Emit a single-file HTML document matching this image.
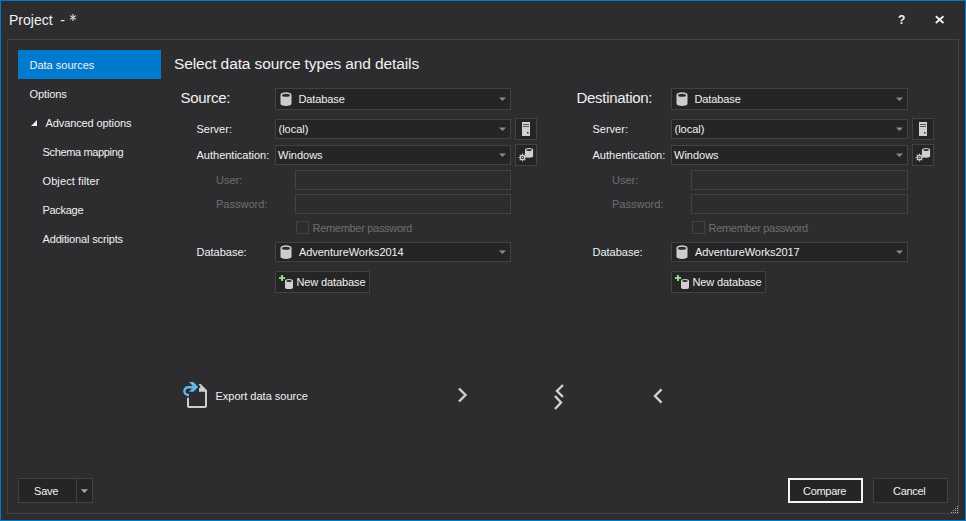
<!DOCTYPE html>
<html><head><meta charset="utf-8"><style>
html,body{margin:0;padding:0;}
body{width:966px;height:521px;background:#2d2d30;position:relative;overflow:hidden;font-family:"Liberation Sans",sans-serif;}
.t{position:absolute;white-space:pre;}
.r{position:absolute;}
</style></head><body>
<div class="r" style="left:0px;top:0px;width:966px;height:521px;border:1px solid #007acc;box-sizing:border-box;"></div>
<div class="t" style="left:9px;top:13.15px;font-size:14px;line-height:14px;color:#f1f1f1;">Project&nbsp;&nbsp;-</div>
<svg class="r" style="left:66px;top:10px" width="14" height="14"><g stroke="#e8e8e8" stroke-width="1.05"><path d="M7 4 L7 11"/><path d="M4 5.6 L10 9.4"/><path d="M10 5.6 L4 9.4"/></g></svg>
<svg class="r" style="left:0;top:0" width="966" height="40"><text x="898" y="24" font-family="Liberation Sans" font-weight="bold" font-size="12" fill="#f1f1f1">?</text><path d="M935.8 16.3 L943.5 23 M943.5 16.3 L935.8 23" stroke="#f1f1f1" stroke-width="1.8"/></svg>
<div class="r" style="left:7px;top:39px;width:952px;height:475px;border:1px solid #434346;box-sizing:border-box;"></div>
<div class="r" style="left:18px;top:50px;width:143px;height:29px;background:#007acc;"></div>
<div class="t" style="left:29.5px;top:59.69px;font-size:11px;line-height:11px;color:#f1f1f1;">Data sources</div>
<div class="t" style="left:29.5px;top:88.69px;font-size:11px;line-height:11px;color:#f1f1f1;letter-spacing:-0.1px;">Options</div>
<div class="t" style="left:45.5px;top:117.69px;font-size:11px;line-height:11px;color:#f1f1f1;letter-spacing:-0.1px;">Advanced options</div>
<div class="t" style="left:42.5px;top:146.69px;font-size:11px;line-height:11px;color:#f1f1f1;letter-spacing:-0.35px;">Schema mapping</div>
<div class="t" style="left:42.5px;top:175.69px;font-size:11px;line-height:11px;color:#f1f1f1;letter-spacing:0.1px;">Object filter</div>
<div class="t" style="left:42.5px;top:204.69px;font-size:11px;line-height:11px;color:#f1f1f1;letter-spacing:-0.3px;">Package</div>
<div class="t" style="left:42.5px;top:233.69px;font-size:11px;line-height:11px;color:#f1f1f1;letter-spacing:-0.15px;">Additional scripts</div>
<svg class="r" style="left:30px;top:119px" width="9" height="9"><path d="M7 1 L7 7 L1 7 Z" fill="#ececec"/></svg>
<div class="t" style="left:174px;top:55.88px;font-size:15.5px;line-height:15.5px;color:#f1f1f1;letter-spacing:-0.11px;">Select data source types and details</div>
<div class="t" style="left:180.5px;top:90.30px;font-size:15px;line-height:15px;color:#f1f1f1;letter-spacing:-0.3px;">Source:</div>
<div class="r" style="left:275px;top:88px;width:236px;height:22px;background:#252526;border:1px solid #424242;box-sizing:border-box;"></div>
<svg class="r" style="left:499px;top:97px" width="8" height="5"><path d="M0 0.5 L7 0.5 L3.5 4 Z" fill="#8a8a8a"/></svg>
<svg class="r" style="left:280px;top:92px" width="13" height="15" viewBox="0 0 13 15"><path d="M0.5 2.8 A5.5 2.6 0 0 1 11.5 2.8 L11.5 11.7 A5.5 2.3 0 0 1 0.5 11.7 Z" fill="#cdcdcd"/><ellipse cx="6.0" cy="3.3" rx="4.0" ry="1.5" fill="#2a2a2a"/></svg>
<div class="t" style="left:298.5px;top:93.69px;font-size:11px;line-height:11px;color:#f1f1f1;letter-spacing:-0.1px;">Database</div>
<div class="t" style="left:196.5px;top:123.69px;font-size:11px;line-height:11px;color:#f1f1f1;">Server:</div>
<div class="r" style="left:275px;top:119px;width:236px;height:20px;background:#252526;border:1px solid #424242;box-sizing:border-box;"></div>
<svg class="r" style="left:499px;top:127px" width="8" height="5"><path d="M0 0.5 L7 0.5 L3.5 4 Z" fill="#8a8a8a"/></svg>
<div class="t" style="left:278.5px;top:123.69px;font-size:11px;line-height:11px;color:#f1f1f1;">(local)</div>
<div class="r" style="left:515px;top:118px;width:22px;height:22px;background:#252526;border:1px solid #424242;box-sizing:border-box;"></div>
<svg class="r" style="left:515px;top:118px" width="22" height="22"><rect x="7" y="4" width="8" height="14" fill="#d0d0d0"/><rect x="8" y="6" width="6" height="1" fill="#555"/><rect x="8" y="8" width="6" height="1" fill="#555"/><rect x="12" y="14" width="1.5" height="1.5" fill="#333"/></svg>
<div class="t" style="left:196.5px;top:149.69px;font-size:11px;line-height:11px;color:#f1f1f1;">Authentication:</div>
<div class="r" style="left:275px;top:145px;width:236px;height:20px;background:#252526;border:1px solid #424242;box-sizing:border-box;"></div>
<svg class="r" style="left:499px;top:153px" width="8" height="5"><path d="M0 0.5 L7 0.5 L3.5 4 Z" fill="#8a8a8a"/></svg>
<div class="t" style="left:278px;top:149.69px;font-size:11px;line-height:11px;color:#f1f1f1;">Windows</div>
<div class="r" style="left:515px;top:144px;width:22px;height:22px;background:#252526;border:1px solid #424242;box-sizing:border-box;"></div>
<svg class="r" style="left:515px;top:144px" width="22" height="22"><path d="M10 5.8 Q10 4.1 14.05 4.1 Q18.1 4.1 18.1 5.8 L18.1 12 Q18.1 13.7 14.05 13.7 Q10 13.7 10 12 Z" fill="#d0d0d0"/><ellipse cx="14.05" cy="6.1" rx="2.9" ry="1" fill="#2e2e2e"/><g transform="translate(7.5 13.5)" fill="#c8c8c8"><circle cx="3.30" cy="0.00" r="0.75"/><circle cx="2.33" cy="2.33" r="0.75"/><circle cx="0.00" cy="3.30" r="0.75"/><circle cx="-2.33" cy="2.33" r="0.75"/><circle cx="-3.30" cy="0.00" r="0.75"/><circle cx="-2.33" cy="-2.33" r="0.75"/><circle cx="-0.00" cy="-3.30" r="0.75"/><circle cx="2.33" cy="-2.33" r="0.75"/><circle r="2.1" fill="none" stroke="#d0d0d0" stroke-width="1.1"/><circle r="0.8" fill="#d0d0d0"/></g></svg>
<div class="t" style="left:216px;top:174.69px;font-size:11px;line-height:11px;color:#6d6d6d;">User:</div>
<div class="r" style="left:295px;top:170px;width:216px;height:20px;border:1px solid #424242;box-sizing:border-box;"></div>
<div class="t" style="left:216px;top:198.69px;font-size:11px;line-height:11px;color:#6d6d6d;">Password:</div>
<div class="r" style="left:295px;top:194px;width:216px;height:20px;border:1px solid #424242;box-sizing:border-box;"></div>
<div class="r" style="left:296px;top:221px;width:13px;height:13px;border:1px solid #424242;box-sizing:border-box;"></div>
<div class="t" style="left:312.5px;top:222.69px;font-size:11px;line-height:11px;color:#6d6d6d;letter-spacing:-0.3px;">Remember password</div>
<div class="t" style="left:196.5px;top:246.69px;font-size:11px;line-height:11px;color:#f1f1f1;">Database:</div>
<div class="r" style="left:275px;top:242px;width:236px;height:20px;background:#252526;border:1px solid #424242;box-sizing:border-box;"></div>
<svg class="r" style="left:499px;top:250px" width="8" height="5"><path d="M0 0.5 L7 0.5 L3.5 4 Z" fill="#8a8a8a"/></svg>
<svg class="r" style="left:280px;top:245px" width="13" height="15" viewBox="0 0 13 15"><path d="M0.5 2.8 A5.5 2.6 0 0 1 11.5 2.8 L11.5 11.7 A5.5 2.3 0 0 1 0.5 11.7 Z" fill="#cdcdcd"/><ellipse cx="6.0" cy="3.3" rx="4.0" ry="1.5" fill="#2a2a2a"/></svg>
<div class="t" style="left:299px;top:246.69px;font-size:11px;line-height:11px;color:#f1f1f1;letter-spacing:-0.05px;">AdventureWorks2014</div>
<div class="r" style="left:275px;top:271px;width:95px;height:22px;background:#252526;border:1px solid #424242;box-sizing:border-box;"></div>
<svg class="r" style="left:278px;top:274px" width="18" height="17"><path d="M4 1 L4 7 M1 4 L7 4" stroke="#8ad88a" stroke-width="2"/><path d="M7 6.5 A4 1.6 0 0 1 15 6.5 L15 13.5 A4 1.6 0 0 1 7 13.5 Z" fill="#d0d0d0"/><ellipse cx="11" cy="7" rx="2.8" ry="1.1" fill="#2a2a2a"/></svg>
<div class="t" style="left:296.5px;top:276.69px;font-size:11px;line-height:11px;color:#f1f1f1;letter-spacing:-0.12px;">New database</div>
<div class="t" style="left:576.5px;top:90.30px;font-size:15px;line-height:15px;color:#f1f1f1;letter-spacing:-0.3px;">Destination:</div>
<div class="r" style="left:671px;top:88px;width:237px;height:22px;background:#252526;border:1px solid #424242;box-sizing:border-box;"></div>
<svg class="r" style="left:896px;top:97px" width="8" height="5"><path d="M0 0.5 L7 0.5 L3.5 4 Z" fill="#8a8a8a"/></svg>
<svg class="r" style="left:676px;top:92px" width="13" height="15" viewBox="0 0 13 15"><path d="M0.5 2.8 A5.5 2.6 0 0 1 11.5 2.8 L11.5 11.7 A5.5 2.3 0 0 1 0.5 11.7 Z" fill="#cdcdcd"/><ellipse cx="6.0" cy="3.3" rx="4.0" ry="1.5" fill="#2a2a2a"/></svg>
<div class="t" style="left:694.5px;top:93.69px;font-size:11px;line-height:11px;color:#f1f1f1;letter-spacing:-0.1px;">Database</div>
<div class="t" style="left:592.5px;top:123.69px;font-size:11px;line-height:11px;color:#f1f1f1;">Server:</div>
<div class="r" style="left:671px;top:119px;width:237px;height:20px;background:#252526;border:1px solid #424242;box-sizing:border-box;"></div>
<svg class="r" style="left:896px;top:127px" width="8" height="5"><path d="M0 0.5 L7 0.5 L3.5 4 Z" fill="#8a8a8a"/></svg>
<div class="t" style="left:674.5px;top:123.69px;font-size:11px;line-height:11px;color:#f1f1f1;">(local)</div>
<div class="r" style="left:912px;top:118px;width:22px;height:22px;background:#252526;border:1px solid #424242;box-sizing:border-box;"></div>
<svg class="r" style="left:912px;top:118px" width="22" height="22"><rect x="7" y="4" width="8" height="14" fill="#d0d0d0"/><rect x="8" y="6" width="6" height="1" fill="#555"/><rect x="8" y="8" width="6" height="1" fill="#555"/><rect x="12" y="14" width="1.5" height="1.5" fill="#333"/></svg>
<div class="t" style="left:592.5px;top:149.69px;font-size:11px;line-height:11px;color:#f1f1f1;">Authentication:</div>
<div class="r" style="left:671px;top:145px;width:237px;height:20px;background:#252526;border:1px solid #424242;box-sizing:border-box;"></div>
<svg class="r" style="left:896px;top:153px" width="8" height="5"><path d="M0 0.5 L7 0.5 L3.5 4 Z" fill="#8a8a8a"/></svg>
<div class="t" style="left:674px;top:149.69px;font-size:11px;line-height:11px;color:#f1f1f1;">Windows</div>
<div class="r" style="left:912px;top:144px;width:22px;height:22px;background:#252526;border:1px solid #424242;box-sizing:border-box;"></div>
<svg class="r" style="left:912px;top:144px" width="22" height="22"><path d="M10 5.8 Q10 4.1 14.05 4.1 Q18.1 4.1 18.1 5.8 L18.1 12 Q18.1 13.7 14.05 13.7 Q10 13.7 10 12 Z" fill="#d0d0d0"/><ellipse cx="14.05" cy="6.1" rx="2.9" ry="1" fill="#2e2e2e"/><g transform="translate(7.5 13.5)" fill="#c8c8c8"><circle cx="3.30" cy="0.00" r="0.75"/><circle cx="2.33" cy="2.33" r="0.75"/><circle cx="0.00" cy="3.30" r="0.75"/><circle cx="-2.33" cy="2.33" r="0.75"/><circle cx="-3.30" cy="0.00" r="0.75"/><circle cx="-2.33" cy="-2.33" r="0.75"/><circle cx="-0.00" cy="-3.30" r="0.75"/><circle cx="2.33" cy="-2.33" r="0.75"/><circle r="2.1" fill="none" stroke="#d0d0d0" stroke-width="1.1"/><circle r="0.8" fill="#d0d0d0"/></g></svg>
<div class="t" style="left:612px;top:174.69px;font-size:11px;line-height:11px;color:#6d6d6d;">User:</div>
<div class="r" style="left:691px;top:170px;width:217px;height:20px;border:1px solid #424242;box-sizing:border-box;"></div>
<div class="t" style="left:612px;top:198.69px;font-size:11px;line-height:11px;color:#6d6d6d;">Password:</div>
<div class="r" style="left:691px;top:194px;width:217px;height:20px;border:1px solid #424242;box-sizing:border-box;"></div>
<div class="r" style="left:692px;top:221px;width:13px;height:13px;border:1px solid #424242;box-sizing:border-box;"></div>
<div class="t" style="left:708.5px;top:222.69px;font-size:11px;line-height:11px;color:#6d6d6d;letter-spacing:-0.3px;">Remember password</div>
<div class="t" style="left:592.5px;top:246.69px;font-size:11px;line-height:11px;color:#f1f1f1;">Database:</div>
<div class="r" style="left:671px;top:242px;width:237px;height:20px;background:#252526;border:1px solid #424242;box-sizing:border-box;"></div>
<svg class="r" style="left:896px;top:250px" width="8" height="5"><path d="M0 0.5 L7 0.5 L3.5 4 Z" fill="#8a8a8a"/></svg>
<svg class="r" style="left:676px;top:245px" width="13" height="15" viewBox="0 0 13 15"><path d="M0.5 2.8 A5.5 2.6 0 0 1 11.5 2.8 L11.5 11.7 A5.5 2.3 0 0 1 0.5 11.7 Z" fill="#cdcdcd"/><ellipse cx="6.0" cy="3.3" rx="4.0" ry="1.5" fill="#2a2a2a"/></svg>
<div class="t" style="left:695px;top:246.69px;font-size:11px;line-height:11px;color:#f1f1f1;letter-spacing:-0.05px;">AdventureWorks2017</div>
<div class="r" style="left:671px;top:271px;width:95px;height:22px;background:#252526;border:1px solid #424242;box-sizing:border-box;"></div>
<svg class="r" style="left:674px;top:274px" width="18" height="17"><path d="M4 1 L4 7 M1 4 L7 4" stroke="#8ad88a" stroke-width="2"/><path d="M7 6.5 A4 1.6 0 0 1 15 6.5 L15 13.5 A4 1.6 0 0 1 7 13.5 Z" fill="#d0d0d0"/><ellipse cx="11" cy="7" rx="2.8" ry="1.1" fill="#2a2a2a"/></svg>
<div class="t" style="left:692.5px;top:276.69px;font-size:11px;line-height:11px;color:#f1f1f1;letter-spacing:-0.12px;">New database</div>
<svg class="r" style="left:176px;top:376px" width="40" height="40"><path d="M12 21.8 L12 30 Q12 31 13 31 L29 31 Q30 31 30 30 L30 15" fill="none" stroke="#cdcdcd" stroke-width="2"/><path d="M22.5 8 L24.7 8 L31 14.3 L31 15.8 L23 15.8 L23 12.6 L24.6 10.9 Z" fill="#cdcdcd"/><path d="M18 11.2 L12.3 11.2 A3.9 3.9 0 0 0 12.3 19 L13 19" fill="none" stroke="#62b6f2" stroke-width="2.4"/><path d="M13 6.1 L17.4 6.1 L22.2 10.9 L17.4 15.8 L13 15.8 L17.8 10.9 Z" fill="#62b6f2"/></svg>
<div class="t" style="left:215.5px;top:390.69px;font-size:11px;line-height:11px;color:#f1f1f1;">Export data source</div>
<svg class="r" style="left:0;top:360px" width="966" height="60"><path d="M459 28.5 L465.5 35 L459 41.5" fill="none" stroke="#d0d0d0" stroke-width="2.4"/><path d="M563 25 L557 31 L563 37" fill="none" stroke="#d0d0d0" stroke-width="2.4"/><path d="M555 36 L561 42.5 L555 49" fill="none" stroke="#d0d0d0" stroke-width="2.4"/><path d="M661.5 29.3 L655 36 L661.5 42.7" fill="none" stroke="#d0d0d0" stroke-width="2.4"/></svg>
<div class="r" style="left:18px;top:478px;width:75px;height:25px;background:#252526;border:1px solid #424242;box-sizing:border-box;"></div>
<div class="r" style="left:76px;top:478px;width:1px;height:25px;background:#424242;"></div>
<svg class="r" style="left:80px;top:489px" width="9" height="6"><path d="M0.8 0.2 L8 0.2 L4.4 4 Z" fill="#a8a8a8"/></svg>
<div class="t" style="left:34px;top:485.69px;font-size:11px;line-height:11px;color:#f1f1f1;letter-spacing:-0.2px;">Save</div>
<div class="r" style="left:788px;top:478px;width:75px;height:25px;background:#252526;border:2px solid #f4f4f4;box-sizing:border-box;"></div>
<div class="t" style="left:803px;top:485.69px;font-size:11px;line-height:11px;color:#f1f1f1;letter-spacing:-0.3px;">Compare</div>
<div class="r" style="left:873px;top:478px;width:75px;height:25px;background:#252526;border:1px solid #424242;box-sizing:border-box;"></div>
<div class="t" style="left:893px;top:485.69px;font-size:11px;line-height:11px;color:#f1f1f1;letter-spacing:-0.3px;">Cancel</div>
<svg class="r" style="left:0;top:0" width="966" height="521"><rect x="957" y="506" width="1" height="1" fill="#b0b0b0"/><rect x="955" y="508" width="1" height="1" fill="#b0b0b0"/><rect x="957" y="508" width="1" height="1" fill="#b0b0b0"/><rect x="953" y="510" width="1" height="1" fill="#b0b0b0"/><rect x="955" y="510" width="1" height="1" fill="#b0b0b0"/><rect x="957" y="510" width="1" height="1" fill="#b0b0b0"/><rect x="951" y="512" width="1" height="1" fill="#b0b0b0"/><rect x="953" y="512" width="1" height="1" fill="#b0b0b0"/><rect x="955" y="512" width="1" height="1" fill="#b0b0b0"/><rect x="957" y="512" width="1" height="1" fill="#b0b0b0"/></svg>
</body></html>
